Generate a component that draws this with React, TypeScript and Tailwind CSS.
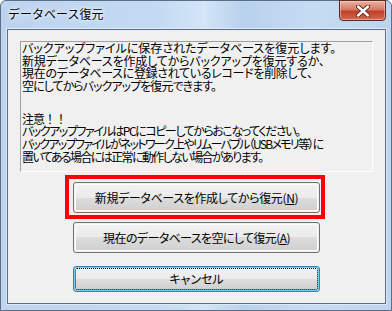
import React from "react";

const jp = "font-['Noto_Sans_CJK_JP','Noto_Sans',sans-serif]";

function Btn({ children, def }: { children: React.ReactNode; def?: boolean }) {
  return (
    <div
      className={
        "w-[247px] rounded-[3px] border p-px " +
        (def ? "h-[26px] border-[#3c7fb1] shadow-[inset_0_0_0_1px_#6fd0f7]" : "h-[31px] border-[#707070]")
      }
    >
      <div
        className={
          "w-full h-full rounded-[2px] flex items-center justify-center text-[12px] text-black [font-feature-settings:'palt'] " +
          "bg-[linear-gradient(to_bottom,#f2f2f2_0%,#ebebeb_50%,#dddddd_50%,#cfcfcf_100%)] " +
          (def ? "outline-1 outline-dotted outline-black -outline-offset-1" : "shadow-[inset_0_0_0_1px_#fcfcfc]")
        }
      >
        {children}
      </div>
    </div>
  );
}

export default function App() {
  return (
    <div className={"w-[392px] h-[311px] overflow-hidden bg-white " + jp}>
      <div className="w-full h-full flex flex-col rounded-t-[6px] border border-[#5d6f86] bg-[linear-gradient(to_right,#bcd4ee_0%,#c3daf2_40%,#d3e5f7_52%,#b8d1ec_62%,#c6dcf3_80%,#bcd4ee_100%)]">
        <div className="h-[28px] relative flex items-start">
          <div className="pl-[7px] pt-[5px] text-[12px] leading-[16px] text-black [text-shadow:0_0_6px_#ffffff,0_0_3px_#ffffff]">
            データベース復元
          </div>
          <div className="absolute right-[5px] top-[-1px] w-[47px] h-[21px] rounded-b-[4px] border border-[#5a2a22] bg-[linear-gradient(to_bottom,#eab3a3_0%,#d77a63_45%,#c2402a_55%,#d26a50_100%)] flex items-center justify-center shadow-[inset_0_0_0_1px_rgba(255,220,210,0.5)]">
            <svg width="14" height="12" viewBox="0 0 14 12">
              <path d="M2 1.5 L12 10.5 M12 1.5 L2 10.5" stroke="#4a2018" strokeWidth="4.2" strokeLinecap="round" />
              <path d="M2 1.5 L12 10.5 M12 1.5 L2 10.5" stroke="#ffffff" strokeWidth="2.4" strokeLinecap="round" />
            </svg>
          </div>
        </div>
        <div className="flex-1 ml-[6px] mr-[5px] mb-[6px] border border-[#5b6e85] bg-[#f0f0f0] flex flex-col items-center pt-[11px] shadow-[0_0_0_1px_#dceaf8]">
          <div className="w-[353px] h-[131px] border border-t-[#a0a0a0] border-l-[#a0a0a0] border-b-white border-r-white pl-[1px] text-[12px] leading-[12.67px] text-black [font-feature-settings:'palt'] whitespace-nowrap">
            <div>バックアップファイルに保存されたデータベースを復元します。</div>
            <div className="tracking-[-0.15px]">新規データベースを作成してからバックアップを復元するか、</div>
            <div className="tracking-[-0.3px]">現在のデータベースに登録されているレコードを削除して、</div>
            <div className="tracking-[-0.95px]">空にしてからバックアップを復元できます。</div>
            <div className="h-[20px]" />
            <div className="tracking-[-1px] [font-feature-settings:normal]">注意！！</div>
            <div className="tracking-[-1.45px]">バックアップファイルはPCにコピーしてからおこなってください。</div>
            <div className="tracking-[-1.7px]">バックアップファイルがネットワーク上やリムーバブル（USBメモリ等）に</div>
            <div className="tracking-[-1.6px]">置いてある場合には正常に動作しない場合があります。</div>
          </div>
          <div className="relative mt-[10px]">
            <div className="absolute left-[-8px] top-[-7px] w-[260px] h-[44px] border-4 border-[#ff0000]" />
            <Btn>
              <span className="tracking-[-0.35px]">
                新規データベースを作成してから復元(<span className="underline">N</span>)
              </span>
            </Btn>
          </div>
          <div className="mt-[9px]">
            <Btn>
              <span className="tracking-[-0.6px]">
                現在のデータベースを空にして復元(<span className="underline">A</span>)
              </span>
            </Btn>
          </div>
          <div className="mt-[13px]">
            <Btn def>キャンセル</Btn>
          </div>
        </div>
      </div>
    </div>
  );
}
